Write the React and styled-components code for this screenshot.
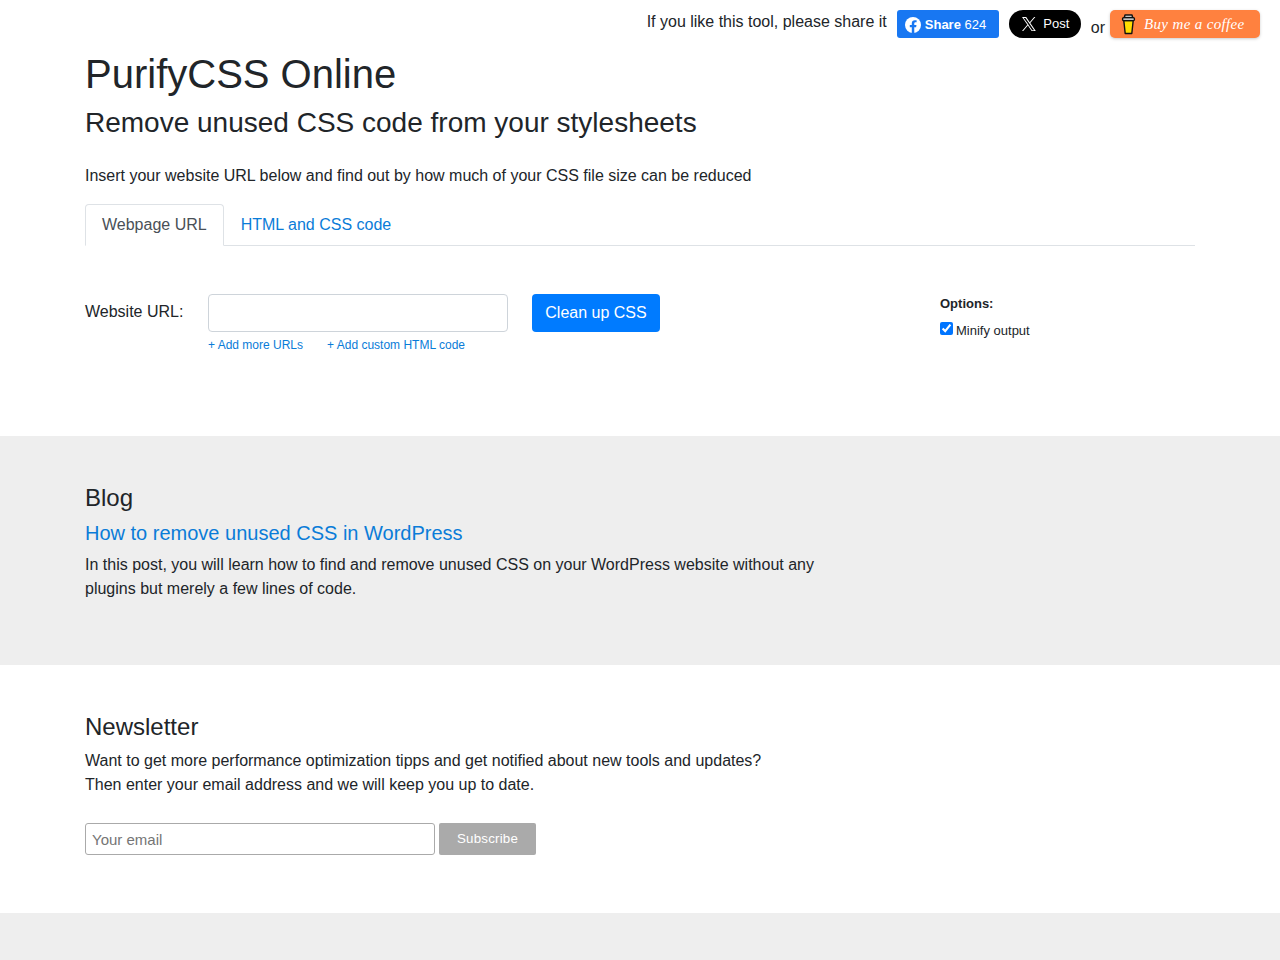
import React from "react";
import styled, { createGlobalStyle } from "styled-components";

const Global = createGlobalStyle`
  html, body { margin: 0; padding: 0; background: #fff; }
  body {
    font-family: "Liberation Sans", Arial, sans-serif;
    font-size: 16px;
    line-height: 24px;
    color: #212529;
  }
  * { box-sizing: border-box; }
`;

const TopBar = styled.div`
  display: flex;
  justify-content: flex-end;
  align-items: flex-start;
  height: 48px;
  padding: 10px 20px 0 0;
`;
const ShareText = styled.span`
  margin: 1px 10px 0 0;
  line-height: 22px;
`;
const FbButton = styled.a`
  display: flex;
  align-items: center;
  gap: 4px;
  width: 102px;
  height: 28px;
  padding: 1px 8px 0;
  margin-right: 10px;
  background: #1877f2;
  color: #fff;
  border-radius: 3px;
  font-size: 13px;
  line-height: 27px;
  strong { font-weight: 700; }
`;
const XButton = styled.a`
  display: flex;
  align-items: center;
  justify-content: center;
  gap: 7px;
  width: 72px;
  height: 28px;
  padding-left: 2px;
  background: #000;
  color: #fff;
  border-radius: 14px;
  font-size: 13px;
  line-height: 28px;
`;
const OrText = styled.span`
  margin: 6px 5px 0 10px;
  line-height: 24px;
`;
const CoffeeButton = styled.a`
  display: flex;
  align-items: center;
  gap: 7px;
  width: 150px;
  height: 28px;
  padding-left: 10px;
  background: #ff813f;
  color: #fff;
  border-radius: 5px;
  box-shadow: 0 1px 3px rgba(190, 190, 190, 0.8);
  font-family: "Liberation Serif", serif;
  font-style: italic;
  font-size: 15px;
  letter-spacing: 0.35px;
  white-space: nowrap;
`;
const Container = styled.div`
  width: 1140px;
  margin: 0 auto;
  padding: 0 15px;
`;
const Title = styled.h1`
  margin: 2px 0 0;
  font-size: 40px;
  font-weight: 500;
  line-height: 48px;
`;
const Subtitle = styled.h2`
  margin: 4px 0 0;
  font-size: 28px;
  font-weight: 500;
  line-height: 42px;
`;
const Intro = styled.p`
  margin: 20px 0 16px;
`;
const Tabs = styled.div`
  display: flex;
  height: 42px;
  border-bottom: 1px solid #dee2e6;
`;
const Tab = styled.a`
  height: 42px;
  padding: 8px 16px;
  border: 1px solid ${(p) => (p.$active ? "#dee2e6" : "transparent")};
  border-bottom-color: ${(p) => (p.$active ? "#fff" : "transparent")};
  border-radius: 4px 4px 0 0;
  color: ${(p) => (p.$active ? "#495057" : "#0a7cd8")};
  background: ${(p) => (p.$active ? "#fff" : "transparent")};
`;
const FormRow = styled.div`
  display: flex;
  align-items: flex-start;
  padding-top: 48px;
  height: 190px;
`;
const Label = styled.label`
  width: 123px;
  padding-top: 6px;
`;
const Field = styled.div`
  width: 300px;
`;
const UrlInput = styled.input`
  display: block;
  width: 300px;
  height: 38px;
  padding: 6px 12px;
  border: 1px solid #ced4da;
  border-radius: 4px;
  font: inherit;
`;
const SmallLinks = styled.div`
  display: flex;
  gap: 24px;
  font-size: 12px;
  line-height: 18px;
  margin-top: 4px;
  color: #0a7cd8;
`;
const Primary = styled.button`
  width: 128px;
  height: 38px;
  margin-left: 24px;
  padding: 0;
  border: 0;
  border-radius: 4px;
  background: #007bff;
  color: #fff;
  font: inherit;
`;
const Options = styled.div`
  margin-left: 280px;
  font-size: 13px;
  line-height: 20px;
`;
const OptionsTitle = styled.div`
  font-weight: 700;
`;
const OptionRow = styled.label`
  display: flex;
  align-items: center;
  gap: 3px;
  margin-top: 7px;
  input { width: 13px; height: 13px; margin: -6px 0 0; }
`;
const Band = styled.section`
  background: ${(p) => (p.$gray ? "#eee" : "#fff")};
  height: ${(p) => p.$height}px;
  padding-top: 46px;
`;
const BandTitle = styled.h3`
  margin: 0;
  font-size: 24px;
  font-weight: 500;
  line-height: 32px;
`;
const PostTitle = styled.a`
  display: block;
  margin-top: 7px;
  font-size: 20px;
  line-height: 24px;
  color: #0a7cd8;
`;
const Para = styled.p`
  margin: ${(p) => p.$top}px 0 0;
  width: 740px;
`;
const NewsForm = styled.form`
  display: flex;
  gap: 4px;
  margin-top: 26px;
`;
const EmailInput = styled.input`
  width: 350px;
  height: 32px;
  padding: 0 6px;
  border: 1px solid #aaa;
  border-radius: 3px;
  font: 15px "Liberation Sans", Arial, sans-serif;
  &::placeholder { color: #757575; opacity: 1; }
`;
const Subscribe = styled.button`
  width: 97px;
  height: 32px;
  border: 0;
  border-radius: 2px;
  background: #aaa;
  color: #fff;
  font: 13.33px "Liberation Sans", Arial, sans-serif;
  letter-spacing: 0.2px;
  padding: 0 0 2px;
`;
const Footer = styled.div`
  height: 47px;
  background: #eee;
`;

export default function App() {
  return (
    <>
      <Global />
      <TopBar>
        <ShareText>If you like this tool, please share it</ShareText>
        <FbButton>
          <svg width="16" height="16" viewBox="0 0 24 24">
            <circle cx="12" cy="12" r="12" fill="#fff" />
            <path fill="#1877f2" d="M16.7 15.5l.5-3.5h-3.3V9.8c0-1 .5-1.9 2-1.9h1.5v-3s-1.4-.2-2.7-.2c-2.7 0-4.5 1.7-4.5 4.6V12h-3v3.5h3V24h3.7v-8.5z" />
          </svg>
          <span><strong>Share</strong> 624</span>
        </FbButton>
        <XButton>
          <svg width="14" height="14" viewBox="0 0 24 24" fill="#fff">
            <path d="M14.2 10.2 22.9 0h-2.1l-7.6 8.9L7.2 0H0l9.2 13.4L0 24h2.1l8-9.3 6.4 9.3h7.2zm-2.9 3.3-.9-1.3L2.8 1.6H6l6 8.5.9 1.3 7.8 11.1h-3.2z" />
          </svg>
          Post
        </XButton>
        <OrText>or</OrText>
        <CoffeeButton>
          <svg width="17" height="22" viewBox="0 0 17 22">
            <path d="M3.8 7.5h9.4L11.8 20.5H5.2z" fill="#ffdd00" stroke="#111" strokeWidth="1.4" strokeLinejoin="round" />
            <path d="M5 2h7l.7 2.5H4.3z" fill="#fff" stroke="#111" strokeWidth="1.4" strokeLinejoin="round" />
            <rect x="2.6" y="4.7" width="11.8" height="2.8" rx="1" fill="#fff" stroke="#111" strokeWidth="1.4" />
          </svg>
          <span>Buy me a coffee</span>
        </CoffeeButton>
      </TopBar>
      <Container>
        <Title>PurifyCSS Online</Title>
        <Subtitle>Remove unused CSS code from your stylesheets</Subtitle>
        <Intro>Insert your website URL below and find out by how much of your CSS file size can be reduced</Intro>
        <Tabs>
          <Tab $active>Webpage URL</Tab>
          <Tab>HTML and CSS code</Tab>
        </Tabs>
        <FormRow>
          <Label>Website URL:</Label>
          <Field>
            <UrlInput />
            <SmallLinks>
              <a>+ Add more URLs</a>
              <a>+ Add custom HTML code</a>
            </SmallLinks>
          </Field>
          <Primary>Clean up CSS</Primary>
          <Options>
            <OptionsTitle>Options:</OptionsTitle>
            <OptionRow>
              <input type="checkbox" defaultChecked />
              Minify output
            </OptionRow>
          </Options>
        </FormRow>
      </Container>
      <Band $gray $height={229}>
        <Container>
          <BandTitle>Blog</BandTitle>
          <PostTitle>How to remove unused CSS in WordPress</PostTitle>
          <Para $top={8}>
            In this post, you will learn how to find and remove unused CSS on your WordPress website without any plugins but merely a few lines of code.
          </Para>
        </Container>
      </Band>
      <Band $height={248}>
        <Container>
          <BandTitle>Newsletter</BandTitle>
          <Para $top={6}>
            Want to get more performance optimization tipps and get notified about new tools and updates?
            <br />
            Then enter your email address and we will keep you up to date.
          </Para>
          <NewsForm>
            <EmailInput placeholder="Your email" />
            <Subscribe type="button">Subscribe</Subscribe>
          </NewsForm>
        </Container>
      </Band>
      <Footer />
    </>
  );
}
